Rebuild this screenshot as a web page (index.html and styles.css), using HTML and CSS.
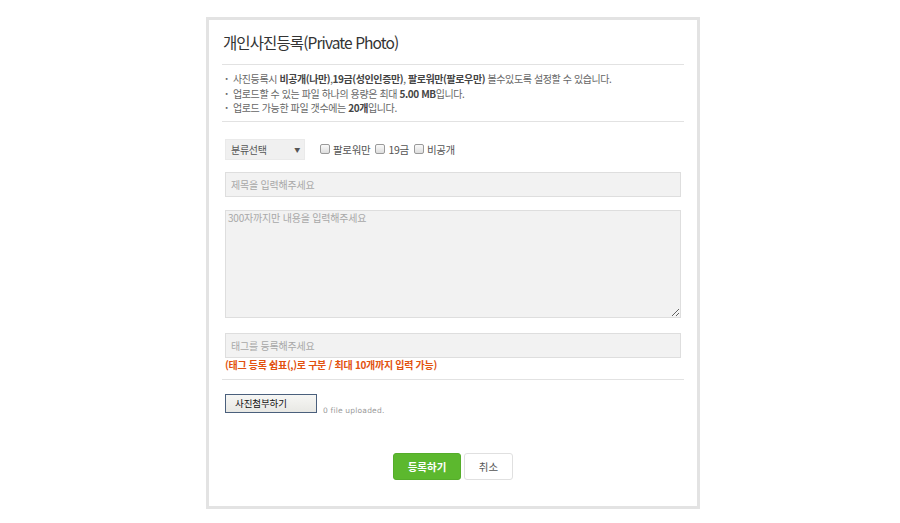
FILE: index.html
```html
<!DOCTYPE html>
<html lang="ko">
<head>
<meta charset="utf-8">
<title>개인사진등록</title>
<link rel="stylesheet" href="styles.css">
</head>
<body>
<div class="box">
  <h1 class="title">개인사진등록(Private Photo)</h1>
  <ul class="notes">
    <li>사진등록시 <b>비공개(나만)</b>,<b>19금(성인인증만)</b>, <b>팔로워만(팔로우만)</b> 볼수있도록 설정할 수 있습니다.</li>
    <li>업로드할 수 있는 파일 하나의 용량은 최대 <b>5.00 MB</b>입니다.</li>
    <li>업로드 가능한 파일 갯수에는 <b>20개</b>입니다.</li>
  </ul>
  <div class="form">
    <div class="row-opts">
      <div class="select"><span>분류선택</span><span class="caret">▼</span></div>
      <label class="chk"><input type="checkbox"><span>팔로워만</span></label>
      <label class="chk"><input type="checkbox"><span>19금</span></label>
      <label class="chk"><input type="checkbox"><span>비공개</span></label>
    </div>
    <input class="field" type="text" placeholder="제목을 입력해주세요">
    <textarea class="area" placeholder="300자까지만 내용을 입력해주세요"></textarea>
    <input class="field tag" type="text" placeholder="태그를 등록해주세요">
    <p class="tag-note">(태그 등록 쉼표(,)로 구분 / 최대 10개까지 입력 가능)</p>
  </div>
  <div class="upload">
    <button class="file-btn" type="button">사진첨부하기</button>
    <span class="file-info">0 file uploaded.</span>
  </div>
  <div class="actions">
    <button class="btn-submit" type="button">등록하기</button>
    <button class="btn-cancel" type="button">취소</button>
  </div>
</div>
</body>
</html>
```

FILE: styles.css
```css
html, body {
  margin: 0;
  padding: 0;
  background: #fff;
}
body {
  font-family: "Noto Sans CJK KR", "Noto Sans", sans-serif;
  color: #555;
}
.box {
  box-sizing: border-box;
  width: 494px;
  height: 492px;
  margin: 17px 0 0 206px;
  border: 3px solid #e3e3e3;
  padding: 0 13px;
}
.title {
  margin: 0;
  padding: 10px 0 10px 1px;
  font-size: 15.5px;
  line-height: 24px;
  font-weight: 400;
  color: #333;
  border-bottom: 1px solid #e2e2e2;
  letter-spacing: -0.9px;
}
.notes {
  list-style: none;
  margin: 0;
  padding: 7px 0 5px 3px;
  font-size: 10px;
  line-height: 14.5px;
  color: #666;
  border-bottom: 1px solid #e2e2e2;
  letter-spacing: -0.4px;
}
.notes li::before {
  content: "·";
  display: inline-block;
  width: 8px;
  font-weight: bold;
}
.notes b {
  color: #444;
}
.form {
  padding: 17px 3px 0;
  display: flex;
  flex-direction: column;
}
.row-opts {
  display: flex;
  align-items: center;
  height: 21px;
}
.select {
  box-sizing: border-box;
  width: 80px;
  height: 21px;
  background: #f0f0f0;
  border: 1px solid #eaeaea;
  display: flex;
  align-items: center;
  justify-content: space-between;
  padding: 0 4px 0 5px;
  font-size: 10px;
  color: #555;
  margin-right: 15px;
  letter-spacing: -0.3px;
}
.caret {
  font-size: 6px;
  color: #555;
}
.chk {
  display: flex;
  align-items: center;
  font-size: 10.5px;
  color: #555;
  margin-right: 5px;
  letter-spacing: -0.3px;
}
.chk input {
  -webkit-appearance: none;
  appearance: none;
  box-sizing: border-box;
  width: 10px;
  height: 10px;
  margin: 0 3px 0 0;
  border: 1px solid #9a9a9a;
  border-radius: 2px;
  background: linear-gradient(#fafafa, #dedede);
}
.field, .area {
  box-sizing: border-box;
  width: 100%;
  background: #f2f2f2;
  border: 1px solid #dedede;
  font-family: "Noto Sans CJK KR", "Noto Sans", sans-serif;
  font-size: 10px;
  color: #555;
  outline: none;
  margin: 0;
  letter-spacing: -0.2px;
}
.field {
  height: 25px;
  padding: 0 5px;
  margin-top: 12px;
}
.area {
  height: 108px;
  margin-top: 13px;
  padding: 0 2px;
  resize: vertical;
  line-height: 14px;
}
.field.tag {
  margin-top: 15px;
}
::placeholder {
  color: #a8a8a8;
}
.tag-note {
  margin: 0 -3px;
  font-size: 10px;
  line-height: 13px;
  font-weight: 700;
  color: #e2520f;
  padding: 0 0 8px 3px;
  border-bottom: 1px solid #e2e2e2;
  letter-spacing: -0.3px;
}
.upload {
  display: flex;
  align-items: flex-end;
  padding: 14px 3px 0;
  height: 19px;
}
.file-btn {
  box-sizing: border-box;
  width: 92px;
  height: 19px;
  padding: 0 0 0 9px;
  text-align: left;
  border: 1px solid #4a5f7c;
  background: linear-gradient(#f6f6f4, #e8e8e4);
  font-family: "Noto Sans CJK KR", "Noto Sans", sans-serif;
  font-size: 9.5px;
  font-weight: 400;
  color: #111;
  border-radius: 0;
  letter-spacing: -0.1px;
}
.file-info {
  font-family: "DejaVu Sans", sans-serif;
  font-size: 7.5px;
  color: #999;
  margin-left: 6px;
  letter-spacing: 0.2px;
  line-height: 9px;
  margin-bottom: -2px;
}
.actions {
  display: flex;
  justify-content: center;
  gap: 3px;
  padding-top: 40px;
}
.btn-submit, .btn-cancel {
  box-sizing: border-box;
  height: 27px;
  border-radius: 3px;
  font-family: "Noto Sans CJK KR", "Noto Sans", sans-serif;
  font-size: 10.5px;
  padding: 0;
}
.btn-submit {
  width: 68px;
  background: #5cb82e;
  border: 1px solid #55ad2a;
  color: #fff;
  font-weight: 700;
}
.btn-cancel {
  width: 49px;
  background: #fff;
  border: 1px solid #e0e0e0;
  color: #555;
}
```
